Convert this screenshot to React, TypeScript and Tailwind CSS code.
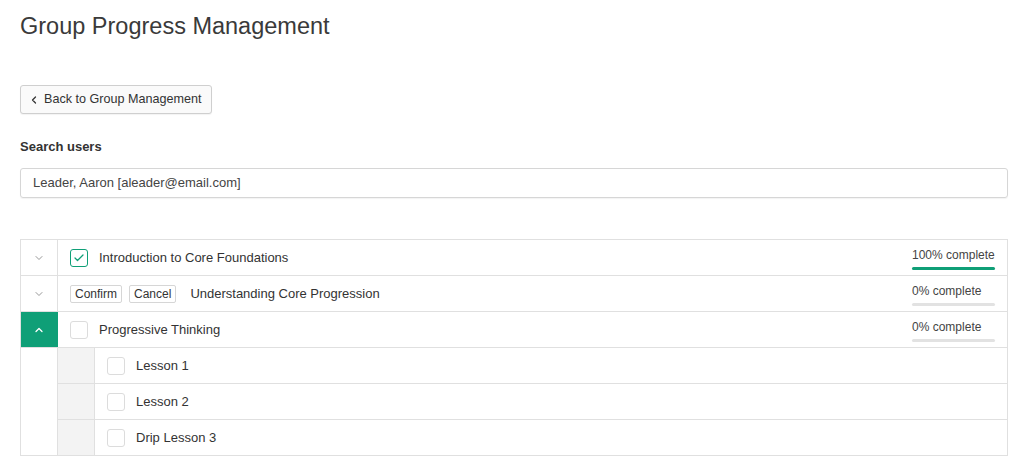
import { ChevronDown, ChevronUp, ChevronLeft, Check } from "lucide-react";

interface Lesson {
  title: string;
  done: boolean;
}

interface Course {
  title: string;
  progress: number;
  done: boolean;
  pending?: boolean;
  open?: boolean;
  lessons?: Lesson[];
}

const courses: Course[] = [
  { title: "Introduction to Core Foundations", progress: 100, done: true },
  { title: "Understanding Core Progression", progress: 0, done: false, pending: true },
  {
    title: "Progressive Thinking",
    progress: 0,
    done: false,
    open: true,
    lessons: [
      { title: "Lesson 1", done: false },
      { title: "Lesson 2", done: false },
      { title: "Drip Lesson 3", done: false },
    ],
  },
];

function Box({ checked }: { checked: boolean }) {
  return (
    <span
      className={
        "flex h-[18px] w-[18px] shrink-0 items-center justify-center rounded-[3px] border bg-white " +
        (checked ? "border-[#0f9f77] text-[#0f9f77]" : "border-[#dcdcdc]")
      }
    >
      {checked && <Check className="h-3 w-3" strokeWidth={2.5} />}
    </span>
  );
}

function Progress({ value }: { value: number }) {
  return (
    <div className="flex w-[83px] flex-col gap-[5px] pt-[2px]">
      <span className="whitespace-nowrap text-[12px] leading-[14px] text-[#444]">{value}% complete</span>
      <div className="h-[3px] w-full rounded-full bg-[#e2e2e2]">
        <div className="h-full rounded-full bg-[#0f9f77]" style={{ width: `${value}%` }} />
      </div>
    </div>
  );
}

export default function App() {
  return (
    <div
      className="min-h-screen bg-white px-5 text-[#333]"
      style={{ fontFamily: "'Liberation Sans', Arial, sans-serif" }}
    >
      <h1 className="pt-[11px] text-[23.5px] leading-[30px] font-normal text-[#3a3a3a]">
        Group Progress Management
      </h1>

      <button className="mt-[44px] flex h-[29px] items-center gap-[4px] rounded-[3px] border border-[#cfcfcf] bg-[#fafafa] pl-[7px] pr-[9px] text-[12.6px] text-[#333] shadow-[0_1px_1px_rgba(0,0,0,0.05)]">
        <ChevronLeft className="h-3 w-3" strokeWidth={2.5} />
        Back to Group Management
      </button>

      <label className="mt-[25px] block text-[13px] leading-[16px] font-bold text-[#333]">
        Search users
      </label>
      <div className="mt-[13px] flex h-[30px] w-[988px] items-center rounded-[3px] border border-[#d6d6d6] px-[12px] text-[13px] text-[#444] shadow-[0_1px_1px_rgba(0,0,0,0.05)]">
        Leader, Aaron [aleader@email.com]
      </div>

      <div className="mt-[41px] w-[988px] border border-[#e0e0e0] text-[13px] text-[#333]">
        {courses.map((c, i) => (
          <div key={c.title}>
            <div className={"flex h-[35px] " + (i > 0 ? "box-content border-t border-[#e0e0e0]" : "")}>
              <div
                className={
                  "flex w-[37px] shrink-0 items-center justify-center border-r " +
                  (c.open ? "border-[#0f9f77] bg-[#0f9f77] text-white" : "border-[#e0e0e0] text-[#888]")
                }
              >
                {c.open ? (
                  <ChevronUp className="h-3 w-3" strokeWidth={2.5} />
                ) : (
                  <ChevronDown className="h-3 w-3" strokeWidth={1.75} />
                )}
              </div>
              <div className="flex flex-1 items-center pl-[12px] pr-[12px]">
                {c.pending ? (
                  <div className="flex items-center gap-[7px]">
                    <span className="rounded-[2px] border border-[#d6d6d6] px-[4px] py-[1px] text-[12px] leading-[14px]">Confirm</span>
                    <span className="rounded-[2px] border border-[#d6d6d6] px-[4px] py-[1px] text-[12px] leading-[14px]">Cancel</span>
                  </div>
                ) : (
                  <Box checked={c.done} />
                )}
                <span className={c.pending ? "ml-[14px]" : "ml-[11px]"}>{c.title}</span>
                <div className="ml-auto">
                  <Progress value={c.progress} />
                </div>
              </div>
            </div>
            {c.open && (
              <div className="flex border-t border-[#e0e0e0]">
                <div className="w-[37px] shrink-0 border-r border-[#e0e0e0]" />
                <div className="flex-1">
                  {c.lessons?.map((l, j) => (
                    <div
                      key={l.title}
                      className={"flex h-[35px] " + (j > 0 ? "box-content border-t border-[#e0e0e0]" : "")}
                    >
                      <div className="w-[37px] shrink-0 border-r border-[#e0e0e0] bg-[#f3f3f3]" />
                      <div className="flex flex-1 items-center gap-[11px] pl-[12px]">
                        <Box checked={l.done} />
                        <span>{l.title}</span>
                      </div>
                    </div>
                  ))}
                </div>
              </div>
            )}
          </div>
        ))}
      </div>
    </div>
  );
}
